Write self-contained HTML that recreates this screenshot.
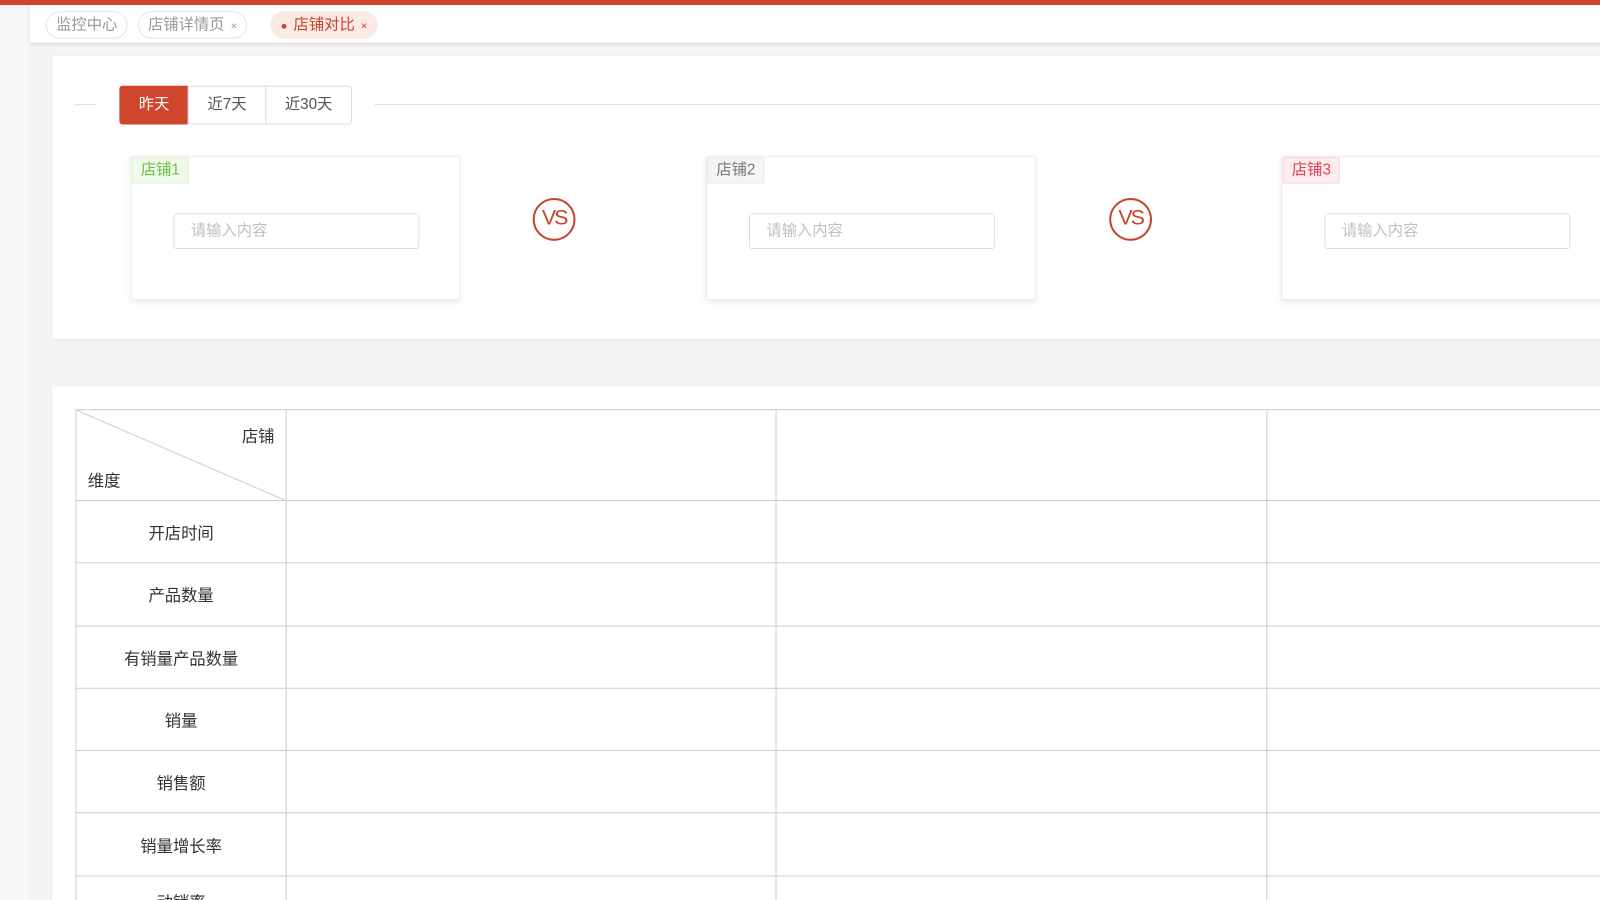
<!DOCTYPE html>
<html><head><meta charset="utf-8"><style>
*{box-sizing:border-box;margin:0;padding:0}
html,body{width:1600px;height:900px;overflow:hidden}
body{background:#f4f4f4;font-family:"Liberation Sans","Noto Sans CJK SC",sans-serif;position:relative}
#w{position:absolute;left:0;top:0;width:1568px;height:882px;transform:scale(1.0204);transform-origin:0 0;overflow:hidden}
.top{position:absolute;left:0;top:0;width:1600px;height:5px;background:#d0452d}
.side{position:absolute;left:0;top:5px;width:29px;height:895px;background:#f7f7f7}
.tabs{position:absolute;left:29px;top:5px;width:1571px;height:37px;background:#fff;box-shadow:0 1px 3px rgba(0,0,0,.12)}
.tab{position:absolute;top:6px;height:27px;border:1px solid #e4e4e4;border-radius:14px;font-size:15px;color:#999;line-height:25px;padding:0 9px}
.tab .x{font-size:11px;margin-left:6px}
.card{position:absolute;left:51px;width:1549px;background:#fff;box-shadow:0 1px 4px rgba(0,0,0,.06)}
.btn{position:absolute;top:84px;height:38px;border:1px solid #dcdcdc;font-size:15px;line-height:36px;text-align:center;color:#555;background:#fff}
.line{position:absolute;top:102px;height:1px;background:#e2e2e2}
.shop{position:absolute;top:153px;width:323px;height:141px;background:#fff;border:1px solid #eee;box-shadow:0 2px 6px rgba(0,0,0,.1)}
.tag{position:absolute;left:0;top:0;height:26px;padding:0 8px;font-size:15px;line-height:24px;border:1px solid;border-radius:2px}
.inp{position:absolute;left:41px;top:55px;width:241px;height:35px;border:1px solid #dcdcdc;border-radius:3px;font-size:15px;color:#c0c0c0;line-height:33px;padding-left:16px}
.vs{position:absolute;top:194px;width:42px;height:42px;border:2.5px solid #c8432b;border-radius:50%;color:#c8432b;font-size:21px;line-height:36px;text-align:center;letter-spacing:-2px}
table{position:absolute;left:74px;top:401px;border-collapse:collapse;table-layout:fixed;width:1641px}
td{border:1px solid #ccc;font-size:16px;color:#333;text-align:center;height:61.3px}
</style></head><body><div id="w">
<div class="top"></div><div class="side"></div>
<div class="tabs">
<div class="tab" style="left:16px">监控中心</div>
<div class="tab" style="left:106px">店铺详情页<span class="x">×</span></div>
<div class="tab" style="left:236px;background:#fbe9e4;border-color:#fbe9e4;color:#c8432b"><span style="font-size:11px;margin-right:6px">●</span>店铺对比<span class="x">×</span></div>
</div>
<div class="card" style="top:55px;height:277px"></div>
<div class="line" style="left:73px;width:22px"></div>
<div class="line" style="left:367px;width:1233px"></div>
<div class="btn" style="left:117px;width:68px;background:#d0452d;border-color:#d0452d;color:#fff;border-radius:3px 0 0 3px">昨天</div>
<div class="btn" style="left:184px;width:77px">近7天</div>
<div class="btn" style="left:260px;width:85px;border-radius:0 3px 3px 0">近30天</div>
<div class="shop" style="left:128px"><div class="tag" style="color:#67c23a;background:#f0f9eb;border-color:#e1f3d8">店铺1</div><div class="inp">请输入内容</div></div>
<div class="vs" style="left:522px">VS</div>
<div class="shop" style="left:692px"><div class="tag" style="color:#777;background:#f4f4f5;border-color:#e9e9eb">店铺2</div><div class="inp">请输入内容</div></div>
<div class="vs" style="left:1087px">VS</div>
<div class="shop" style="left:1256px"><div class="tag" style="color:#e04050;background:#fdecee;border-color:#f9d3d7">店铺3</div><div class="inp">请输入内容</div></div>
<div class="card" style="top:379px;height:521px"></div>
<table>
<colgroup><col style="width:206px"><col style="width:480px"><col style="width:481px"><col style="width:474px"></colgroup>
<tr><td style="height:89px;position:relative;text-align:left">
<svg style="position:absolute;left:0;top:0" width="206" height="89"><line x1="0" y1="0" x2="206" y2="89" stroke="#ccc"/></svg>
<span style="position:absolute;right:11px;top:12px">店铺</span><span style="position:absolute;left:11px;top:56px">维度</span></td>
<td></td><td></td><td></td></tr>
<tr><td>开店时间</td><td></td><td></td><td></td></tr>
<tr><td>产品数量</td><td></td><td></td><td></td></tr>
<tr><td>有销量产品数量</td><td></td><td></td><td></td></tr>
<tr><td>销量</td><td></td><td></td><td></td></tr>
<tr><td>销售额</td><td></td><td></td><td></td></tr>
<tr><td>销量增长率</td><td></td><td></td><td></td></tr>
<tr><td style="vertical-align:top;padding-top:12px">动销率</td><td></td><td></td><td></td></tr>
</table>
</div></body></html>
